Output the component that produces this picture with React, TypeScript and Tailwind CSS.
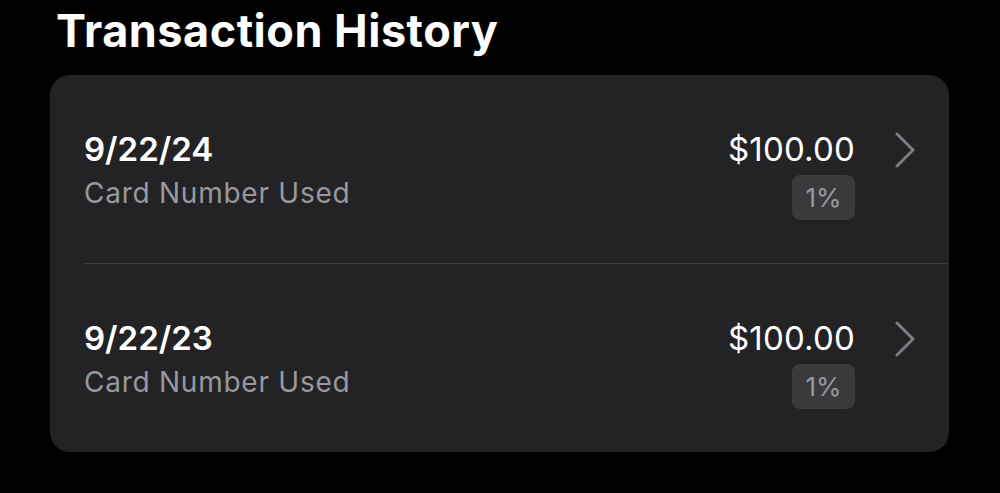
const transactions = [
  { date: "9/22/24", source: "Card Number Used", amount: "$100.00", cashback: "1%" },
  { date: "9/22/23", source: "Card Number Used", amount: "$100.00", cashback: "1%" },
];

function Chevron() {
  return (
    <svg width="22" height="36" viewBox="0 0 22 36" fill="none" className="shrink-0">
      <path d="M3 2 L19 18 L3 34" stroke="#7d7d82" strokeWidth="3" strokeLinecap="round" strokeLinejoin="round" />
    </svg>
  );
}

export default function App() {
  return (
    <div
      className="min-h-[493px] w-[1000px] bg-black pl-[50px] pr-[51px] pt-[4px]"
      style={{ fontFamily: "Inter, 'Noto Sans', sans-serif" }}
    >
      <h1 className="mb-[18px] pl-[6px] text-[45px] font-bold leading-[53px] tracking-[0.5px] text-white">
        Transaction History
      </h1>
      <div className="overflow-hidden rounded-[20px] bg-[#232325]">
        {transactions.map((t, idx) => (
          <div key={t.date}>
            {idx > 0 && <div className="ml-[34px] h-px bg-[#3a3a3c]" />}
            <div className="flex h-[188px] items-start pl-[34px] pr-[33px] pt-[54px]">
              <div className="flex-1">
                <div className="text-[33px] font-semibold leading-[40px] text-white">{t.date}</div>
                <div className="mt-[7px] text-[28px] leading-[34px] tracking-[0.75px] text-[#98989e]">
                  {t.source}
                </div>
              </div>
              <div className="flex flex-col items-end">
                <div className="text-[33px] leading-[40px] tracking-[0.2px] text-white">{t.amount}</div>
                <div className="mt-[6px] flex h-[45px] w-[63px] items-center justify-center rounded-[8px] bg-[#3a3a3c] text-[26px] text-[#98989e]">
                  {t.cashback}
                </div>
              </div>
              <div className="ml-[39px] mt-[3px]">
                <Chevron />
              </div>
            </div>
          </div>
        ))}
      </div>
    </div>
  );
}
